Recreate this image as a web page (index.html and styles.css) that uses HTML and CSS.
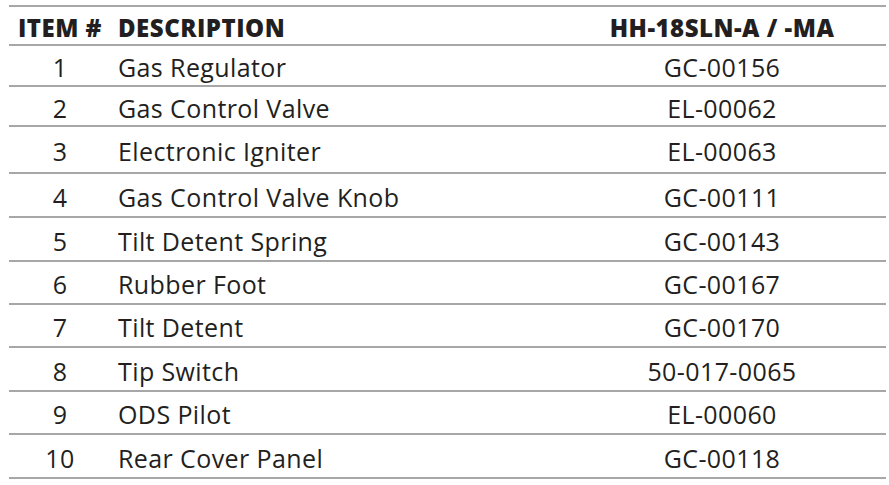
FILE: index.html
```
<!DOCTYPE html>
<html>
<head>
<meta charset="utf-8">
<link rel="stylesheet" href="styles.css">
</head>
<body>
<div class="parts">
  <div class="row head">
    <div class="c1">ITEM #</div>
    <div class="c2">DESCRIPTION</div>
    <div class="c3">HH-18SLN-A / -MA</div>
  </div>
  <div class="row"><div class="c1">1</div><div class="c2">Gas Regulator</div><div class="c3">GC-00156</div></div>
  <div class="row"><div class="c1">2</div><div class="c2">Gas Control Valve</div><div class="c3">EL-00062</div></div>
  <div class="row"><div class="c1">3</div><div class="c2">Electronic Igniter</div><div class="c3">EL-00063</div></div>
  <div class="row"><div class="c1">4</div><div class="c2">Gas Control Valve Knob</div><div class="c3">GC-00111</div></div>
  <div class="row"><div class="c1">5</div><div class="c2">Tilt Detent Spring</div><div class="c3">GC-00143</div></div>
  <div class="row"><div class="c1">6</div><div class="c2">Rubber Foot</div><div class="c3">GC-00167</div></div>
  <div class="row"><div class="c1">7</div><div class="c2">Tilt Detent</div><div class="c3">GC-00170</div></div>
  <div class="row"><div class="c1">8</div><div class="c2">Tip Switch</div><div class="c3">50-017-0065</div></div>
  <div class="row"><div class="c1">9</div><div class="c2">ODS Pilot</div><div class="c3">EL-00060</div></div>
  <div class="row"><div class="c1">10</div><div class="c2">Rear Cover Panel</div><div class="c3">GC-00118</div></div>
</div>
</body>
</html>
```
FILE: styles.css
```
html, body {
  margin: 0;
  padding: 0;
  background: #ffffff;
}
body {
  font-family: "Open Sans", "Liberation Sans", sans-serif;
  color: #231f20;
  font-size: 25px;
  letter-spacing: 0.4px;
}
.parts {
  margin: 5px 0 0 9px;
  width: 877px;
  border-top: 2px solid #a7a7a7;
}
.row {
  display: grid;
  grid-template-columns: 102px 447px 1fr;
  align-items: center;
  box-sizing: border-box;
  height: 41px;
  border-bottom: 2px solid #a7a7a7;
  padding-top: 3px;
}
.head {
  height: 39px;
  font-weight: 800;
  font-size: 24px;
  letter-spacing: 0.5px;
}
.row:nth-child(3) { height: 40px; }
.row:nth-child(4) { height: 47px; }
.row:nth-child(5) { height: 44px; }
.row:nth-child(6) { height: 44px; }
.row:nth-child(7) { height: 43px; }
.row:nth-child(8) { height: 43px; }
.row:nth-child(9) { height: 44px; }
.row:nth-child(10) { height: 43px; }
.row:nth-child(11) { height: 44px; }
.c1 { text-align: center; }
.c2 { padding-left: 7px; }
.c3 { text-align: center; }
```
